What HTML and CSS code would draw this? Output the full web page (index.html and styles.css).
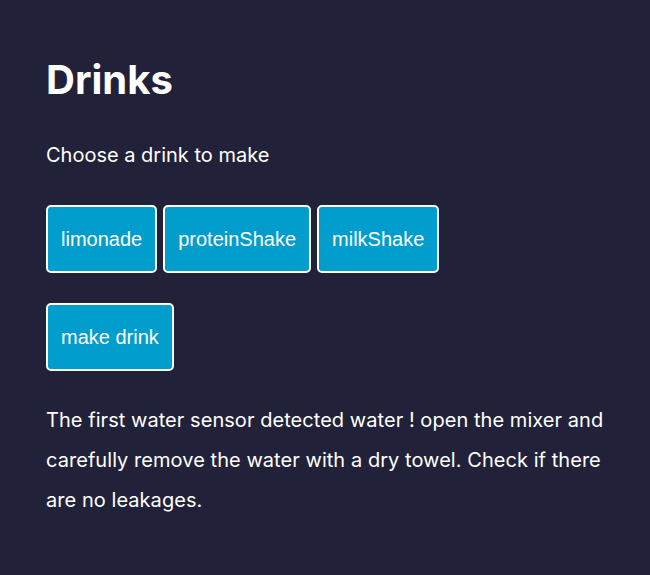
FILE: index.html
```html
<!DOCTYPE html>
<html>
<head>
<meta charset="utf-8">
<link rel="stylesheet" href="styles.css">
</head>
<body>
<main class="app">
  <h1 class="title">Drinks</h1>
  <p class="intro">Choose a drink to make</p>
  <div class="choices">
    <button class="btn">limonade</button>
    <button class="btn">proteinShake</button>
    <button class="btn">milkShake</button>
  </div>
  <div class="actions">
    <button class="btn">make drink</button>
  </div>
  <p class="message">The first water sensor detected water ! open the mixer and carefully remove the water with a dry towel. Check if there are no leakages.</p>
</main>
</body>
</html>
```
FILE: styles.css
```css
html, body {
  margin: 0;
  background: #212239;
}
body {
  font-family: Inter, "Noto Sans", sans-serif;
  color: #ffffff;
}
.app {
  padding: 52px 46px 0 46px;
}
.title {
  font-size: 40px;
  font-weight: 700;
  margin: 0 0 34px 0;
  line-height: 56px;
}
.intro {
  font-size: 20px;
  margin: 0 0 37px 0;
  line-height: 26px;
}
.choices, .actions {
  display: flex;
  gap: 6px;
}
.actions {
  margin-top: 30px;
}
.btn {
  font-family: "Liberation Sans", Arial, sans-serif;
  font-size: 20px;
  color: #ffffff;
  background: #019dcc;
  border: 2px solid #ffffff;
  border-radius: 5px;
  padding: 20px 13px;
  line-height: 24px;
}
.message {
  font-size: 20px;
  line-height: 40px;
  margin: 29px 0 0 0;
  max-width: 560px;
  letter-spacing: 0.05px;
}
```
